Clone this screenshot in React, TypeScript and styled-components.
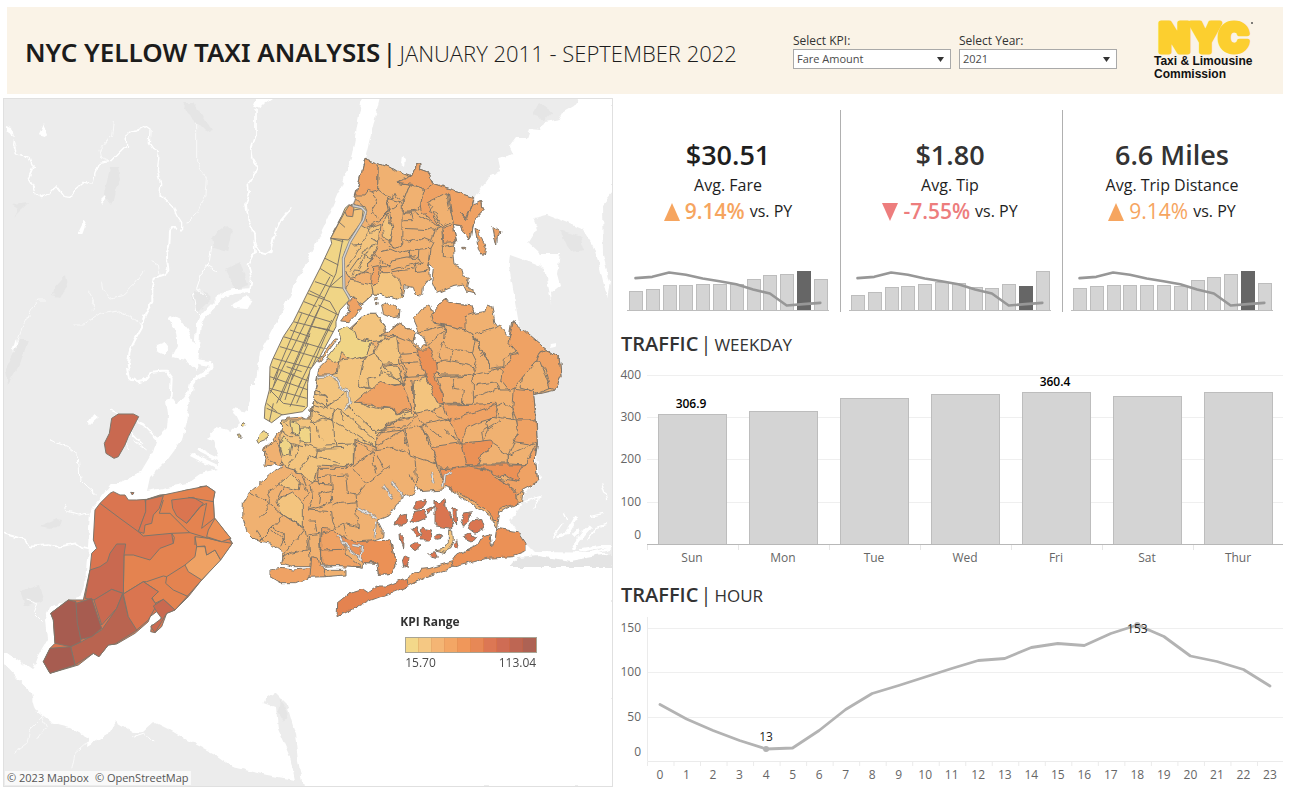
import React, { useState } from "react";
import styled, { createGlobalStyle } from "styled-components";

const GlobalStyle = createGlobalStyle`
  * { box-sizing: border-box; }
  body {
    margin: 0;
    background: #ffffff;
    color: #1e1e1e;
    font-family: "Open Sans", "Noto Sans", sans-serif;
  }
`;

/* ---------- palette ---------- */

const C = {
  yellow: "#f0d586",
  tan: "#f3c47e",
  base: "#f0b171",
  orange: "#efa264",
  deep: "#eb9156",
  burnt: "#e48350",
  rust: "#da7550",
  brick: "#c96950",
  clay: "#b96450",
  wine: "#a75c50",
  line: "#7d756a",
  land: "#ececec",
  shade: "#e5e5e5",
};

const scale = [
  "#f3d88a", "#f5c883", "#f4b574", "#f3a665", "#f0975a",
  "#e78856", "#dc7754", "#cf6c54", "#be6653", "#ad6254",
];

/* ---------- page frame ---------- */

const Page = styled.div`
  padding: 7px 11px 7px 3px;
`;

const Header = styled.header`
  display: flex;
  align-items: center;
  height: 87px;
  margin: 0 1px 4px 4px;
  padding: 0 29px 0 18px;
  background: #faf3e7;
`;

const Title = styled.h1`
  flex: 1;
  margin: 0;
  padding-top: 4px;
  font-family: "Noto Sans", sans-serif;
  font-size: 26px;
  line-height: 36px;
  font-weight: 600;
  color: #1c1c1c;
  white-space: nowrap;
`;

const TitleRange = styled.span`
  font-family: "Open Sans", sans-serif;
  font-size: 22px;
  font-weight: 300;
`;

const Bar = styled.span`
  margin: 0 3px 0 2px;
  font-weight: 400;
`;

const Filters = styled.div`
  display: flex;
  gap: 8px;
`;

const Filter = styled.div`
  display: flex;
  flex-direction: column;
  width: 158px;
`;

const FilterLabel = styled.label`
  font-size: 12px;
  line-height: 17px;
  font-weight: 500;
  color: #333333;
`;

const SelectBox = styled.div`
  display: grid;
  grid-template-columns: 1fr 18px;
  align-items: center;
`;

const Select = styled.select`
  grid-area: 1 / 1 / 2 / 3;
  width: 100%;
  height: 20px;
  padding: 0 3px;
  appearance: none;
  border: 1px solid #a9a9a9;
  border-radius: 0;
  background: #ffffff;
  color: #4a4a4a;
  font-family: inherit;
  font-size: 11px;
  line-height: 16px;
`;

const Caret = styled.svg`
  grid-area: 1 / 2 / 2 / 3;
  width: 7px;
  height: 5px;
  margin-left: 4px;
  pointer-events: none;
`;

const Logo = styled.div`
  display: flex;
  flex-direction: column;
  width: 100px;
  margin-left: 37px;
  font-family: "Liberation Sans", Arial, sans-serif;
  font-size: 12px;
  line-height: 13px;
  font-weight: 700;
  color: #111111;
  white-space: nowrap;
`;

const LogoMark = styled.svg`
  display: block;
  width: 100px;
  height: 34px;
  overflow: visible;
`;

const Board = styled.main`
  display: grid;
  grid-template-columns: minmax(0, 610fr) minmax(0, 666fr);
  gap: 5px;
  align-items: start;
`;

/* ---------- map ---------- */

const MapPanel = styled.section`
  position: relative;
  border: 1px solid #e0e0e0;
`;

const MapDrawing = styled.svg`
  display: block;
  width: 100%;
  height: auto;
`;

const Legend = styled.div`
  position: absolute;
  left: 65%;
  top: 75%;
  width: 140px;
  padding-left: 1px;
`;

const LegendTitle = styled.h2`
  margin: 0;
  font-size: 12px;
  line-height: 16px;
  font-weight: 700;
  color: #333333;
`;

const Swatches = styled.div`
  display: flex;
  height: 16px;
  margin: 7px 2px 2px 5px;
  border: 1px solid #a8a494;
`;

const Swatch = styled.span<{ $color: string }>`
  flex: 1;
  background: ${(p) => p.$color};
  border-right: 1px solid rgba(200, 90, 40, 0.25);
`;

const LegendEnds = styled.div`
  display: flex;
  justify-content: space-between;
  margin: 0 3px 0 5px;
  font-size: 12px;
  line-height: 16px;
  color: #4a4a4a;
`;

const Attribution = styled.p`
  position: absolute;
  left: 1px;
  bottom: 1px;
  display: flex;
  gap: 6px;
  margin: 0;
  padding: 0 2px;
  background: rgba(255, 255, 255, 0.7);
  font-size: 11px;
  line-height: 14px;
  font-weight: 500;
  color: #555555;
`;

/* ---------- KPI cards ---------- */

const KpiRow = styled.section`
  display: grid;
  grid-template-columns: repeat(3, minmax(0, 1fr));
  padding: 12px 0 4px;
`;

const KpiCard = styled.article`
  display: flex;
  flex-direction: column;
  align-items: center;
  padding: 26px 11px 0 9px;

  & + & {
    padding-left: 8px;
    border-left: 1px solid #b0b0b0;
  }
`;

const KpiValue = styled.strong<{ $soft?: boolean }>`
  font-size: 27px;
  line-height: 38px;
  font-weight: 600;
  color: ${(p) => (p.$soft ? "#333333" : "#1e1e1e")};
`;

const KpiName = styled.span`
  font-size: 16px;
  line-height: 22px;
`;

const KpiChange = styled.p`
  display: flex;
  align-items: center;
  gap: 5px;
  margin: 0 0 43px;
  font-size: 16px;
  line-height: 31px;
`;

const Delta = styled.span<{ $down?: boolean; $light?: boolean }>`
  font-size: 21px;
  font-weight: ${(p) => (p.$light ? 400 : 600)};
  color: ${(p) => (p.$down ? "#ed7d7d" : "#f6a55f")};
`;

const Trend = styled.svg`
  width: 16px;
  height: 18px;
`;

const MiniChart = styled.svg`
  display: block;
  width: 100%;
  height: auto;
`;

/* ---------- traffic charts ---------- */

const ChartSection = styled.section`
  padding-top: 14px;
`;

const ChartHeading = styled.h2`
  margin: 0 0 3px;
  padding-left: 3px;
  font-size: 20px;
  line-height: 28px;
  font-weight: 600;
  color: #333333;
`;

const ChartSub = styled.span`
  font-size: 17px;
  font-weight: 400;
`;

const Chart = styled.svg`
  display: block;
  width: 100%;
  height: auto;
  font-size: 12px;
  fill: #666666;
`;

/* ---------- map data ---------- */

type Shape = [string, string];

const WATER = [
  "362,98 380,98 372,130 365,158 353,200 500,215 520,330 540,480 525,492 520,510 510,520 528,545 535,552 613,553 613,566 613,787 303,787 298,760 295,733 287,705 275,693 266,699 264,703 276,707 278,730 290,757 295,780 267,775 233,767 213,753 187,740 170,730 154,722 143,732 133,733 115,722 107,735 87,747 88,737 70,727 50,722 35,710 30,690 17,678 3,663 3,653 7,653 32,670 37,657 47,640 45,620 50,607 80,597 85,583 88,547 90,510 97,503 110,487 140,473 152,453 157,438 167,428 168,415 166,400 172,397 178,406 187,395 190,402 182,440 167,460 150,477 147,491 187,483 200,474 218,470 190,456 192,453 218,465 218,461 196,450 198,447 219,457 213,440 208,438 217,428 230,432 240,423 233,408 248,411 248,404 250,400 250,384 256,384 256,381 260,352 268,338 280,315 293,290 310,255 325,225 342,185 352,155",
  "580,98 574,106 560,114 562,119 545,122 540,130 530,129 527,138 516,138 510,146 514,154 498,158 501,172 490,175 483,185 475,198 470,240 480,300 508,340 514,330 513,318 502,292 508,272 510,255 524,260 530,262 545,268 549,290 552,305 551,292 560,285 557,274 560,253 540,253 528,242 537,228 533,218 547,215 565,222 583,230 593,246 600,268 607,298 610,282 603,255 602,205 613,192 613,98",
];

const LAKES = [
  "253,105 256,98 272,98 265,103 260,108",
  "170,315 180,320 188,330 195,345 198,372 185,360 172,357 178,345 175,328 167,318",
  "157,346 165,343 170,350 163,354 156,351",
  "402,157 406,160 405,166 401,163",
  "39,135 44,124 48,134 46,137",
  "6,125 12,127 14,136 6,131",
  "78,232 84,220 87,221 82,235 78,235",
  "100,200 105,195 106,199 102,204",
  "86,422 95,416 98,418 90,425",
  "232,305 245,297 252,300 247,309 234,308",
  "550,343 556,342 554,347 549,348",
  "13,349 16,338 17,345 14,351",
];

const SHADES = [
  "110,168 118,168 120,180 115,190 112,205 104,195",
  "212,237 227,225 233,230 228,252 214,248",
  "12,205 28,203 22,209 14,217 18,209",
  "53,290 66,275 68,285 60,297 52,295",
  "5,370 20,340 28,340 20,365 8,385",
  "182,103 194,103 212,130 206,132 192,118",
  "193,290 208,294 212,298 198,312 192,300",
  "39,527 58,519 62,520 60,527 50,529",
  "540,103 552,112 545,120 533,115",
  "225,270 240,262 248,285 235,290",
  "560,230 580,236 585,250 570,252",
  "505,340 530,345 540,360 525,365",
  "280,700 288,712 284,722 278,712",
  "20,590 40,585 44,600 25,606",
];

const RIVERS: [number, string][] = [
  [4, "M40 130 38 150 50 175 70 183 90 190 100 215 85 250 100 275 105 295 125 308 145 300 168 275 190 305 210 307 230 278 250 262 278 268 285 235 300 205 330 200 355 175 380 150 378 120 390 108 410 105 432 93 450 105 448 145 458 160 478 170 475 200 472 225 482 270 480 298 505 320 520 335 530 362 545 385 545 400 535 410"],
  [6, "M528 402 515 396 510 405 508 450 500 480 505 520 495 540 465 550 457 580 457 620 440 650 430 670 425 700 405 735 390 765 383 810 390 850 410 862 430 858 450 835 480 830 500 830 515 850 513 890 508 930"],
  [5, "M768 40 768 120 755 160 758 190 772 215 765 235 745 265 748 300 738 325 745 375 762 415 765 470 745 510 755 550 750 585"],
  [6, "M762 440 780 470 800 475 812 468 820 430 830 400 840 380 875 338"],
  [14, "M750 587 700 590 670 600 650 620 630 640 605 670 595 690 590 760 585 785 595 800 630 805"],
  [12, "M630 805 632 825 590 850 575 865 570 890 560 905 530 940"],
  [2, "M340 80 335 120 300 165 305 190 325 200"],
  [2, "M590 80 590 200 622 250 618 300 600 335 590 355 560 385"],
  [3, "M635 450 628 500 605 535 590 580 620 610 M580 590 590 650 600 660 M620 510 655 530"],
  [2, "M455 500 475 510 480 540 M430 530 400 570 370 600 330 610 308 580 305 560 M425 690 390 665 350 645 300 655 250 690 220 690 M265 590 280 615 280 650 M135 615 110 615 90 650 70 690 45 760 M40 130 50 180"],
  [5, "M330 945 430 990 480 1040 M390 1010 430 1050"],
];

const SOUTH_RIVERS: [number, string][] = [
  [3, "M290 165 260 140 240 120 235 50 200 20 150 0 M190 190 200 215 235 225 260 220 285 220"],
  [5, "M10 280 80 300 90 320 140 315 180 320 230 310 250 325 275 330"],
  [2, "M130 830 90 870 80 910 40 940 M125 825 140 860 110 900 M265 905 225 940 215 990"],
  [3, "M400 0 440 30 M370 5 390 30 M400 890 430 880 460 900"],
  [3, "M80 480 110 490 100 520 125 545"],
];

const BAY_INLETS: [number, string][] = [
  [10, "M770 290 800 280 830 230 M820 330 835 300 870 260 M840 330 900 320 935 320"],
  [8, "M690 340 760 350 830 350 935 325"],
  [4, "M760 290 790 250 M860 300 890 260 920 250 M800 240 790 220 M670 185 720 170 700 210 M870 230 910 220 M905 130 920 180"],
  [14, "M600 240 630 260 M640 200 600 215 M820 290 840 270"],
];

const MANHATTAN =
  "345,205 356,195 375,197 405,200 410,212 400,240 345,335 338,360 340,440 358,480 330,510 318,545 318,560 270,650 240,690 233,730 232,800 218,815 155,825 125,848 103,835 105,800 118,750 120,680 127,660 160,590 190,545 232,460 270,385 305,310 302,295 330,240";

const BRONX =
  "195,190 335,243 350,208 360,212 358,222 380,230 392,250 400,268 520,307 510,350 495,370 480,355 500,372 520,330 545,320 550,345 530,365 520,390 515,420 505,435 490,410 485,392 460,388 465,420 470,440 460,450 465,510 485,520 490,545 505,550 500,575 530,598 500,590 490,570 460,575 410,595 395,560 400,520 385,510 388,550 370,575 368,598 345,595 340,580 315,575 310,605 290,612 240,598 220,597 185,628 165,612 150,607 130,580 130,500 150,440 195,360 190,340 158,330 170,290";

const LONG_ISLAND =
  "360,565 410,520 440,520 450,535 465,560 472,577 510,545 520,555 555,580 550,605 570,625 590,610 572,587 565,570 550,535 570,510 600,495 610,520 640,480 680,490 725,495 735,520 765,515 770,495 785,500 795,545 835,605 845,545 950,630 988,655 993,710 975,750 910,765 918,815 922,915 916,960 923,1025 880,1045 875,1085 830,1105 805,1120 800,1165 780,1130 750,1110 650,1040 640,1050 570,1055 560,1035 552,1058 525,1075 500,1090 480,1125 445,1140 460,1170 458,1190 420,1205 480,1200 498,1275 485,1300 445,1303 440,1270 400,1268 400,1285 345,1275 270,1280 190,1280 155,1270 160,1240 120,1210 75,1200 50,1175 38,1130 40,1090 55,1060 90,1030 130,995 160,975 135,968 120,980 104,978 108,955 100,945 102,925 130,900 150,870 165,835 215,832 235,845 240,805 250,780 265,695 290,660 330,610";

const BRONX_AREAS: Shape[] = [
  [C.orange, "195,190 235,205 233,285 215,290 205,286 195,300 168,300"],
  [C.base, "235,205 335,243 310,250 290,262 330,268 310,320 290,305 285,295 280,308 255,302 233,285"],
  [C.orange, "335,243 350,208 360,212 358,222 380,230 392,250 400,268 385,290 360,278 340,268 290,262"],
  [C.base, "330,268 370,280 375,290 360,325 350,345 310,350 310,320"],
  [C.orange, "400,268 520,307 500,370 480,355 495,372 515,330 545,320 550,345 530,365 520,390 505,435 490,410 485,392 460,388 455,360 445,295 385,325 390,350 405,370 420,395 365,350 360,325 372,290"],
  [C.base, "440,293 447,330 460,380 430,395 410,370 405,355 385,350 398,335 385,320"],
  [C.tan, "135,580 150,555 215,570 220,597 185,628 150,607"],
  [C.tan, "215,570 245,530 270,530 300,560 310,605 290,612 240,598 220,597"],
  [C.tan, "135,455 175,385 200,400 240,385 235,450 200,520 150,555 133,530"],
  [C.tan, "247,390 262,360 278,400 270,435 250,425"],
  [C.tan, "135,350 175,340 195,345 185,380 150,435 92,430"],
  [C.orange, "135,350 150,330 162,337 158,365 140,360"],
  [C.orange, "218,515 238,512 235,550 225,572 215,568"],
  [C.orange, "155,400 162,390 132,470 124,475"],
  [C.orange, "430,400 460,388 468,440 430,442"],
  [C.base, "260,310 300,320 307,330 305,450 285,460 270,435 278,400"],
  [C.orange, "150,615 165,612 185,635 165,665 150,680 125,678 145,650"],
  [C.base, "245,630 265,622 300,645 298,665 280,668 250,655"],
  [C.orange, "525,400 535,405 540,425 557,450 550,480 535,460"],
  [C.orange, "578,395 600,410 592,425 590,450 583,420"],
  [C.orange, "485,460 497,460 495,465 486,464"],
  [C.base, "225,608 232,610 230,618 224,616"],
  [C.base, "226,625 232,626 230,633"],
];

const BRONX_LINES =
  "M310 352 340 350 420 395 M330 350 338 380 310 380 M310 400 400 405 420 395 430 400 M310 430 325 438 340 433 365 438 370 430 395 440 405 405 M240 470 270 462 300 475 330 465 390 460 400 440 M325 465 327 490 355 490 357 460 M270 525 370 500 350 490 M270 515 240 490 M345 500 350 530 380 525 390 480 M275 530 345 522 M425 400 430 455 460 450 M430 455 430 485 460 485 M390 460 385 510 M135 452 185 448 210 400 M140 520 185 450 M150 530 200 460 230 450 M175 520 210 460 M155 545 165 525 215 535 M200 520 235 460 M240 515 270 515 275 495 345 482 M165 310 190 335 195 360 210 395 240 375 265 350 300 325 M215 290 230 310 225 330 212 350 235 368 M260 310 270 350 240 375 M245 530 240 500 225 480 M200 400 215 415 240 395 M210 430 235 440 M190 480 220 490 M240 430 285 460 M135 370 150 398";

const QUEENS_AREAS: Shape[] = [
  [C.tan, "150,705 200,655 230,655 255,695 255,735 215,740 170,730"],
  [C.yellow, "115,705 140,695 165,710 172,732 215,740 205,780 155,795 125,770 118,795 95,800 80,790 120,740"],
  [C.base, "240,720 262,712 300,685 345,715 335,740 290,722"],
  [C.tan, "235,740 290,722 300,805 245,808 225,770"],
  [C.tan, "215,745 225,770 245,810 310,870 195,880 175,870 190,800"],
  [C.orange, "395,655 430,615 470,625 515,630 525,655 495,665 495,705 435,690 400,685"],
  [C.base, "435,690 495,705 520,720 525,740 518,770 475,765 460,770 430,740"],
  [C.base, "520,720 585,700 600,690 650,770 610,790 608,815 570,820"],
  [C.orange, "625,740 640,680 740,765 720,770 705,805 665,850 640,880 625,885 605,860 610,830 600,820 635,800 635,780 655,775"],
  [C.orange, "740,765 778,790 783,845 765,885 750,880 735,820 710,800 722,772"],
  [C.base, "665,850 705,803 720,800 750,880 700,900 695,885 660,875"],
  [C.orange, "640,880 700,885 708,975 650,975 635,940"],
  [C.orange, "650,975 708,975 712,1050 640,1040 655,1010"],
  [C.orange, "430,930 520,928 585,925 590,940 580,970 530,985 500,1000 480,1045 462,1000 440,960"],
  [C.base, "585,935 610,920 635,940 640,970 600,975"],
  [C.base, "560,985 580,965 650,975 655,1010 620,1090 550,1040 565,1010"],
  [C.tan, "343,857 375,845 400,890 430,930 400,945 345,955 338,900"],
  [C.orange, "205,885 245,860 260,865 285,875 310,870 335,945 290,960 275,940 230,935 215,925 160,925 190,900"],
  [C.base, "410,845 465,843 520,840 520,925 430,925 425,890"],
  [C.base, "410,800 440,795 515,810 525,840 420,840 405,825"],
  [C.deep, "350,765 380,765 390,752 397,770 392,785 410,800 412,820 402,835 412,870 430,900 430,928 415,930 395,885 380,855 362,800"],
];

const QUEENS_LINES =
  "M345 715 435 690 425 715 400 735 375 755 M298 778 350 775 M325 730 355 765 M300 805 360 800 M315 845 380 840 M300 805 315 845 310 870 M245 810 238 840 250 830 290 850 305 845 300 870 M460 845 465 880 490 885 487 925 M520 840 600 820 M525 870 590 860 600 885 630 885 M520 910 600 880 M520 720 570 820 M430 740 415 775 425 800 M460 770 450 795 M515 770 530 800 518 840 M340 945 370 985 425 1030 M365 990 455 970 M400 945 410 965 455 975 M480 1045 430 1000 M330 950 280 985 225 1010 M225 1040 270 985 350 965 M225 1015 310 1005 365 990 M310 1005 320 1050 M365 990 385 1050 M460 975 480 970 490 960 530 950 585 930 M600 975 545 1010 550 1040 M175 870 205 880 200 855 230 850 M190 800 205 780 225 770";

const JAMAICA_AREAS: Shape[] = [
  [C.deep, "480,10 575,0 580,15 540,50 530,75 500,75"],
  [C.orange, "395,20 485,8 500,75 450,85 415,80"],
  [C.orange, "710,5 706,60 713,125 670,148 650,180 645,150 600,115 660,125 640,105 675,75 690,45"],
  [C.base, "540,50 580,15 625,45 625,72 530,72"],
  [C.base, "625,45 710,5 675,75 625,72"],
  [C.deep, "500,75 675,75 655,100 660,125 640,120 610,105 600,110 560,88"],
  [C.deep, "420,85 450,85 500,80 560,90 620,130 650,160 652,190 600,205 595,250 580,235 560,210 500,170 450,145 432,130"],
  [C.burnt, "110,490 145,462 190,448 205,458 235,438 260,438 318,415 327,438 215,480 108,530"],
  [C.orange, "318,415 360,388 390,385 455,365 460,382 380,410 327,438"],
  [C.deep, "455,365 470,345 530,318 545,290 570,285 575,320 585,300 590,265 655,275 678,310 678,335 640,350 560,355 460,382"],
  [C.rust, "340,205 350,185 380,178 375,195 355,210"],
  [C.rust, "285,258 300,225 320,220 318,250"],
  [C.rust, "330,240 345,215 370,210 380,232 350,245"],
  [C.rust, "405,180 420,195 435,175 440,210 455,235 455,265 405,258"],
  [C.rust, "380,210 402,198 395,215 385,225"],
  [C.rust, "482,240 490,222 518,218 500,245 490,265"],
  [C.rust, "505,265 515,240 545,235 555,265 525,280"],
  [C.rust, "360,300 370,265 395,270 385,300"],
  [C.rust, "338,270 350,260 362,285 350,290"],
  [C.rust, "490,295 505,280 530,292 520,303"],
  [C.rust, "328,318 345,308 362,320 345,332"],
  [C.rust, "305,370 315,348 330,355 325,380 308,385"],
  [C.rust, "383,338 405,335 412,355 395,352"],
  [C.rust, "403,290 418,282 425,295 410,298"],
  [C.rust, "460,310 470,300 475,320 465,322"],
  [C.rust, "455,205 468,210 470,255 458,235"],
  [C.rust, "300,280 310,290 308,325 302,305"],
  [C.tan, "445,268 458,270 460,300 440,338 405,330 430,325 445,305"],
];

const BROOKLYN_AREAS: Shape[] = [
  [C.tan, "265,105 300,105 330,60 410,50 440,80 500,75 520,130 470,140 400,190 540,205 550,230 480,245 440,290 440,325 375,300 370,370 350,380 265,375 250,430 210,400 165,385 150,350 155,240 240,240 240,215 250,180"],
  [C.base, "265,85 290,60 330,50 325,100 300,105 265,105"],
  [C.tan, "255,160 290,165 297,195 280,205 245,195"],
  [C.yellow, "180,245 205,250 208,290 185,280"],
  [C.yellow, "208,262 240,260 242,310 210,305"],
  [C.yellow, "150,315 165,290 185,315 180,345 160,350"],
  [C.base, "100,330 140,300 155,350 150,375 125,365"],
  [C.tan, "150,430 185,400 208,425 205,450 160,440"],
  [C.tan, "140,490 150,475 190,455 220,490 220,565 190,545 160,525"],
  [C.orange, "275,565 310,570 345,600 345,640 395,680 275,675"],
  [C.deep, "325,590 385,605 480,600 498,675 485,700 445,703 440,668 400,668 360,630"],
  [C.orange, "120,690 150,685 190,690 240,685 245,710 200,728 150,728 120,710"],
  [C.orange, "245,650 265,655 270,680 287,685 285,710 240,712"],
  [C.base, "287,688 345,688 345,705 285,710"],
  [C.yellow, "80,300 100,275 120,280 110,300 85,310"],
  [C.yellow, "34,255 44,248 47,254 38,262"],
  [C.yellow, "22,286 32,285 33,291 25,292"],
  [C.base, "263,65 312,0 320,0 270,66"],
];

const BROOKLYN_LINES =
  "M240 210 275 225 300 240 320 205 335 210 340 240 M250 180 297 205 M255 150 290 165 297 195 360 150 M370 185 440 205 490 205 495 225 540 205 M300 200 310 210 308 240 440 325 M340 215 430 295 M350 195 440 280 M240 250 280 235 308 240 318 322 M370 312 370 370 350 378 M240 240 262 262 268 290 280 300 M285 315 370 312 M262 328 345 325 M225 315 262 328 258 355 M210 310 195 350 170 385 M265 350 330 370 M210 390 240 345 262 355 M180 310 225 320 M430 330 490 322 540 345 620 372 M375 305 430 335 M365 380 430 335 430 370 440 400 M440 345 460 385 M365 380 410 430 480 380 M410 430 380 465 M355 380 350 385 265 385 262 410 300 408 355 405 M262 410 270 430 300 432 305 450 M305 410 308 490 M348 410 352 460 380 465 M308 500 330 490 380 485 M375 465 385 560 340 550 310 565 M235 510 305 515 308 545 320 570 M235 510 245 480 240 430 M245 430 265 420 M225 430 235 460 220 480 M185 390 210 400 225 440 M150 430 110 460 125 490 90 530 M60 460 110 480 M108 480 125 495 160 525 130 560 90 600 M130 560 160 580 160 600 150 620 M160 525 225 565 190 610 160 650 M80 570 100 600 M125 570 170 610 M225 565 235 630 180 640 160 655 M235 585 270 580 275 650 M235 540 255 540 260 575 M235 590 240 650 M270 630 340 628 M275 580 320 565 M340 550 350 590 M160 440 140 485 M205 430 230 450 M530 120 520 60 505 45 M545 120 555 220 M440 270 530 260 555 235 M440 315 520 270 M525 270 535 320 M570 255 600 310 M540 345 535 320 M555 350 560 430 M600 310 640 430 M540 400 550 430 M150 270 180 290 208 290 M155 240 175 255 M308 490 235 510 M305 450 270 460 265 500";

const SHORE_CREEKS =
  "M265 110 295 108 320 120 330 145 355 155 360 190 345 210 M385 505 440 535 M460 435 490 480 M485 425 525 475 M440 545 435 590 M325 590 350 620 390 655 395 620 370 615 M270 680 350 682 M605 395 610 430 M640 440 645 405 665 395";

const MANHATTAN_LINES =
  "M302 295 340 305 M320 240 345 262 M285 355 325 375 M270 385 310 410 M255 425 300 440 345 445 M232 460 300 485 320 520 M238 452 285 475 M222 485 260 500 M205 515 250 530 M190 545 310 575 M250 530 300 545 M265 495 345 535 M180 570 240 590 M160 590 280 625 M150 620 270 655 M130 655 265 690 M125 680 240 725 M120 710 235 750 M118 745 230 775 M120 750 160 790 M160 790 225 800 M110 805 170 830 M110 790 140 815 M338 300 318 400 285 470 255 530 140 790 M300 410 240 520 120 760 M320 520 285 590 200 790 M270 500 210 640 150 780 M305 540 250 650 205 740 M235 610 185 720 M215 520 130 720 M190 700 165 780 M215 720 180 800 M130 790 118 845 M345 400 300 440 M250 560 300 570 M240 580 225 620 M170 680 215 695 M145 690 130 740";

const STATEN_ISLAND =
  "330,160 340,155 360,165 375,165 385,180 410,180 440,178 480,165 520,162 560,150 590,148 600,140 620,138 645,155 640,180 643,235 680,280 697,310 660,360 605,420 565,470 525,510 500,520 485,560 465,578 452,575 455,555 475,555 485,530 470,515 450,530 445,545 405,580 350,612 325,615 297,650 280,640 235,675 150,700 130,665 150,625 165,610 160,540 152,520 205,480 250,480 270,390 275,340 290,325 280,300 285,210 300,190";

const STATEN_AREAS: Shape[] = [
  [C.burnt, "372,345 400,345 450,360 480,325 520,310 515,280 430,288 415,275 440,210 435,180 490,165 560,150 620,138 645,155 640,180 643,235 697,310 605,420 525,510 490,478 465,490 455,470 475,455 430,425 370,462"],
  [C.rust, "515,180 580,172 610,190 560,250 530,228 518,205"],
  [C.rust, "437,180 490,167 478,205 460,225 455,250 435,255 432,280 415,275 437,215"],
  [C.orange, "555,375 585,350 590,320 615,320 620,345 645,330 662,360 605,420 565,395"],
  [C.deep, "585,290 625,295 665,305 697,310 662,360 645,330 620,345 615,318 590,320"],
  [C.deep, "620,290 625,270 645,235 680,280 693,295 665,305"],
  [C.brick, "270,390 300,380 322,365 330,340 350,312 377,312 372,345 370,460 335,448 285,480 255,475"],
  [C.brick, "282,480 335,448 368,460 350,505 305,555"],
  [C.clay, "368,462 385,530 412,570 345,612 325,615 297,650 280,640 225,675 212,620 245,605 305,570 350,505"],
  [C.wine, "152,520 205,480 228,485 235,550 243,605 212,620 165,610 160,540"],
  [C.wine, "150,625 212,620 225,675 150,700 130,665"],
  [C.wine, "228,490 275,475 305,565 275,590 243,598 232,550"],
  [C.rust, "370,462 430,425 475,455 455,475 470,495 445,540 410,570 385,530"],
  [C.brick, "460,498 490,478 525,510 500,520 465,578 452,560 485,535 470,515"],
  [C.rust, "392,157 402,158 397,165"],
];

const STATEN_LINES =
  "M300 190 360 235 415 275 M490 180 478 220 510 220 560 270 570 278 M515 280 570 278 625 295 665 305 M560 250 600 200 620 190 615 215 605 265 643 235 M565 172 640 185 M440 425 490 408 500 410 555 375 M500 410 497 430 520 450 565 470 M430 425 440 425 M585 290 585 315 M515 280 523 292 520 310";

/* ---------- map drawing ---------- */

const third = (x: number, y: number) => `translate(${x} ${y}) scale(0.333333)`;

function Areas({ items }: { items: Shape[] }) {
  return (
    <>
      {items.map(([fill, points], i) => (
        <polygon key={i} points={points} fill={fill} />
      ))}
    </>
  );
}

function Strokes({ items }: { items: [number, string][] }) {
  return (
    <>
      {items.map(([w, d], i) => (
        <path key={i} d={d} strokeWidth={w} />
      ))}
    </>
  );
}

function ZoneMap() {
  const ink = { stroke: C.line, strokeWidth: 3, strokeLinejoin: "round" as const };
  const water = { fill: "none", stroke: "#ffffff", strokeLinejoin: "round" as const };
  return (
    <MapDrawing viewBox="4 99 608 687" role="img" aria-label="Taxi zones of New York City">
      <defs>
        <clipPath id="manhattan"><polygon points={MANHATTAN} /></clipPath>
        <clipPath id="longIsland"><polygon points={LONG_ISLAND} /></clipPath>
        {/* roughens ruler-straight edges into shoreline-like ones */}
        <filter id="shore" filterUnits="userSpaceOnUse" x="3" y="98" width="610" height="689" colorInterpolationFilters="sRGB">
          <feTurbulence type="fractalNoise" baseFrequency="0.12" numOctaves="2" seed="4" result="noise" />
          <feDisplacementMap in="SourceGraphic" in2="noise" scale="6" xChannelSelector="R" yChannelSelector="G" />
        </filter>
      </defs>
      <rect x="3" y="98" width="610" height="689" fill={C.land} />
      <g filter="url(#shore)">
        {SHADES.map((p, i) => <polygon key={i} points={p} fill={C.shade} />)}
        {WATER.map((p, i) => <polygon key={i} points={p} fill="#ffffff" />)}
        {LAKES.map((p, i) => <polygon key={i} points={p} fill="#ffffff" />)}
        <g transform={third(0, 95)} {...water}><Strokes items={RIVERS} /></g>
        <g transform={third(0, 440)} {...water}><Strokes items={SOUTH_RIVERS} /></g>
        <polygon points="510,567 517,558 540,556 570,561 613,553 613,567" fill="#e4e4e4" />
        <g transform={third(300, 440)} {...water}><Strokes items={BAY_INLETS} /></g>
      </g>

      <g transform={third(0, 95)} {...ink}>
        <polygon fill={C.brick} points="335,970 355,957 400,957 416,965 385,1025 375,1050 355,1085 342,1090 318,1075 313,1045 328,1015" />
      </g>

      <g transform={third(0, 440)} {...ink}>
        <polygon fill={C.rust} points={STATEN_ISLAND} />
        <Areas items={STATEN_AREAS} />
        <path fill="none" d={STATEN_LINES} />
      </g>

      <g filter="url(#shore)">
        <g transform={third(230, 140)} {...ink}>
          <polygon fill={C.base} points={LONG_ISLAND} />
        </g>

        <g transform={third(300, 95)} {...ink}>
          <polygon fill={C.base} points={BRONX} />
          <Areas items={BRONX_AREAS} />
          <path fill="none" d={BRONX_LINES} />
        </g>

        <g transform={third(230, 340)} {...ink}>
          <Areas items={BROOKLYN_AREAS} />
        </g>
        <g transform={third(300, 95)} {...ink}>
          <Areas items={QUEENS_AREAS} />
          <path fill="none" d={QUEENS_LINES} />
        </g>
        <g transform={third(300, 440)} {...ink}>
          <Areas items={JAMAICA_AREAS} />
        </g>
        <g transform={third(230, 140)} clipPath="url(#longIsland)">
          <g transform="translate(0 600)" {...ink} fill="none">
            <path d={BROOKLYN_LINES} />
            <path d={SHORE_CREEKS} stroke="#8f8b86" strokeWidth="8" />
            <path d={SHORE_CREEKS} stroke="#e2e2e2" strokeWidth="4" />
          </g>
        </g>
      </g>

      <g transform={third(230, 140)} {...ink}>
        <polygon fill={C.yellow} points={MANHATTAN} />
        <polygon fill={C.tan} points="345,215 400,205 395,245 355,300 302,295" />
        <polygon fill={C.orange} points="345,215 358,195 372,202 368,230 350,228" />
        <path fill="none" clipPath="url(#manhattan)" d={MANHATTAN_LINES} />
      </g>
      <g transform={third(300, 95)} fill="none">
        <path d="M158 332 185 338 197 350 190 375 150 440 130 490 132 580 150 610" stroke="#8f8b86" strokeWidth="9" />
        <path d="M158 332 185 338 197 350 190 375 150 440 130 490 132 580 150 610" stroke="#d5d5d5" strokeWidth="4" />
      </g>
    </MapDrawing>
  );
}

/* ---------- charts ---------- */

const TREND = [97, 101, 114, 107, 96, 88, 79, 63, 51, 15, 19, 23];

const cards = [
  { value: "$30.51", name: "Avg. Fare", delta: "9.14%", down: false, light: false, soft: false,
    bars: [19, 21, 25, 25, 26, 26, 26, 31, 35, 36, 39, 31] },
  { value: "$1.80", name: "Avg. Tip", delta: "-7.55%", down: true, light: false, soft: true,
    bars: [15, 18, 23, 24, 26, 28, 27, 23, 22, 26, 24, 39] },
  { value: "6.6 Miles", name: "Avg. Trip Distance", delta: "9.14%", down: false, light: true, soft: true,
    bars: [22, 24, 25, 25, 25, 25, 24, 30, 33, 36, 39, 27] },
];

function MonthlyBars({ bars }: { bars: number[] }) {
  const step = 16.8;
  return (
    <MiniChart viewBox="0 0 202 42" role="img" aria-label="Monthly trend">
      {bars.map((h, i) => (
        <rect
          key={i}
          x={Math.round(2 + i * step) + 0.5}
          y={40.5 - h}
          width="13"
          height={h}
          fill={i === 10 ? "#666666" : "#d4d4d4"}
          stroke={i === 10 ? "#666666" : "#bdbdbd"}
        />
      ))}
      <path d="M0 40.5H202" stroke="#bdbdbd" />
      <polyline
        points={TREND.map((v, i) => `${8.5 + i * step},${40.5 - v / 3}`).join(" ")}
        fill="none" stroke="#979797" strokeWidth="2.6" strokeLinecap="round" strokeLinejoin="round"
      />
    </MiniChart>
  );
}

const weekdays: [string, number, string?][] = [
  ["Sun", 414, "306.9"], ["Mon", 411], ["Tue", 398], ["Wed", 394],
  ["Fri", 392, "360.4"], ["Sat", 396], ["Thur", 392],
];

function WeekdayChart() {
  const ticks: [string, number][] = [["400", 375], ["300", 417], ["200", 459], ["100", 502]];
  return (
    <Chart viewBox="618 362 666 205" role="img" aria-label="Traffic by weekday">
      {ticks.map(([t, y]) => (
        <g key={t}>
          <path d={`M647 ${y + 0.5}H1283`} stroke="#efefef" />
          <text x="641" y={y + 4} textAnchor="end">{t}</text>
        </g>
      ))}
      <text x="641" y="539" textAnchor="end">0</text>
      {weekdays.map(([day, top, label], i) => (
        <g key={day}>
          <rect x={658.5 + i * 91} y={top + 0.5} width="68" height={544 - top} fill="#d4d4d4" stroke="#bdbdbd" />
          <path d={`M${647.5 + i * 91} 545v5`} stroke="#e6e6e6" />
          <text x={692 + i * 91} y="562" textAnchor="middle">{day}</text>
          {label && (
            <text x={691 + i * 91} y={top - 6} textAnchor="middle" fontWeight="600" fill="#000000">{label}</text>
          )}
        </g>
      ))}
      <path d="M647 544.5H1283" stroke="#b8b8b8" />
    </Chart>
  );
}

const hours = [
  704.5, 719, 730.5, 740.5, 749, 748, 730.5, 709.5, 693.5, 685.5, 677, 668.5,
  660.5, 658.5, 647.5, 643.5, 645.5, 633.5, 625, 636.5, 656, 661.5, 669.5, 686,
];

function HourChart() {
  const ticks: [string, number][] = [["150", 628], ["100", 672], ["50", 717]];
  const x = (i: number) => 660 + i * 26.52;
  return (
    <Chart viewBox="618 613 666 172" role="img" aria-label="Traffic by hour">
      {ticks.map(([t, y]) => (
        <g key={t}>
          <path d={`M647 ${y + 0.5}H1283`} stroke="#efefef" />
          <text x="641" y={y + 4} textAnchor="end">{t}</text>
        </g>
      ))}
      <text x="641" y="756" textAnchor="end">0</text>
      <path d="M647.5 617V761.5H1283" fill="none" stroke="#ebebeb" />
      {hours.map((_, i) => (
        <g key={i}>
          <path d={`M${x(i) - 12.5} 762v4`} stroke="#ebebeb" />
          <text x={x(i)} y="779" textAnchor="middle">{i}</text>
        </g>
      ))}
      <polyline
        points={hours.map((y, i) => `${x(i)},${y}`).join(" ")}
        fill="none" stroke="#b3b3b3" strokeWidth="2.8" strokeLinecap="round" strokeLinejoin="round"
      />
      <circle cx={x(4)} cy="749" r="3" fill="#b3b3b3" />
      <circle cx={x(18)} cy="625" r="3" fill="#b3b3b3" />
      <text x={x(4)} y="741" textAnchor="middle" fill="#1e1e1e">13</text>
      <text x={x(18)} y="633" textAnchor="middle" fill="#1e1e1e">153</text>
    </Chart>
  );
}

/* ---------- controls ---------- */

function FilterSelect({ id, label, options }: { id: string; label: string; options: string[] }) {
  const [value, setValue] = useState(options[0]);
  return (
    <Filter>
      <FilterLabel htmlFor={id}>{label}</FilterLabel>
      <SelectBox>
        <Select id={id} value={value} onChange={(e) => setValue(e.target.value)}>
          {options.map((o) => <option key={o}>{o}</option>)}
        </Select>
        <Caret viewBox="0 0 7 5" aria-hidden="true"><path d="M0 0H7L3.5 5Z" fill="#333333" /></Caret>
      </SelectBox>
    </Filter>
  );
}

export default function App() {
  return (
    <Page>
      <GlobalStyle />
      <Header>
        <Title>
          NYC YELLOW TAXI ANALYSIS<Bar>|</Bar><TitleRange>JANUARY 2011 - SEPTEMBER 2022</TitleRange>
        </Title>
        <Filters>
          <FilterSelect id="kpi" label="Select KPI:" options={["Fare Amount"]} />
          <FilterSelect id="year" label="Select Year:" options={["2021"]} />
        </Filters>
        <Logo>
          <LogoMark viewBox="0 0 100 34" role="img" aria-label="NYC">
            <text
              x="50" y="31" textAnchor="middle" fontFamily="Inter, sans-serif" fontSize="40" fontWeight="900"
              fill="#fccf2f" stroke="#fccf2f" strokeWidth="5" strokeLinejoin="round"
            >
              NYC
            </text>
            <circle cx="98" cy="2" r="1" fill="#555555" />
          </LogoMark>
          <span>Taxi &amp; Limousine</span>
          <span>Commission</span>
        </Logo>
      </Header>
      <Board>
        <MapPanel>
          <ZoneMap />
          <Legend>
            <LegendTitle>KPI Range</LegendTitle>
            <Swatches>{scale.map((c) => <Swatch key={c} $color={c} />)}</Swatches>
            <LegendEnds><span>15.70</span><span>113.04</span></LegendEnds>
          </Legend>
          <Attribution><span>© 2023 Mapbox</span><span>© OpenStreetMap</span></Attribution>
        </MapPanel>
        <div>
          <KpiRow>
            {cards.map((c) => (
              <KpiCard key={c.name}>
                <KpiValue $soft={c.soft}>{c.value}</KpiValue>
                <KpiName>{c.name}</KpiName>
                <KpiChange>
                  <Trend viewBox="0 0 16 18" aria-hidden="true">
                    <path d={c.down ? "M0 0H16L8 18Z" : "M0 18H16L8 0Z"} fill={c.down ? "#ed7d7d" : "#f6a55f"} />
                  </Trend>
                  <Delta $down={c.down} $light={c.light}>{c.delta}</Delta>
                  <span>vs. PY</span>
                </KpiChange>
                <MonthlyBars bars={c.bars} />
              </KpiCard>
            ))}
          </KpiRow>
          <ChartSection>
            <ChartHeading>TRAFFIC<Bar>|</Bar><ChartSub>WEEKDAY</ChartSub></ChartHeading>
            <WeekdayChart />
          </ChartSection>
          <ChartSection>
            <ChartHeading>TRAFFIC<Bar>|</Bar><ChartSub>HOUR</ChartSub></ChartHeading>
            <HourChart />
          </ChartSection>
        </div>
      </Board>
    </Page>
  );
}
